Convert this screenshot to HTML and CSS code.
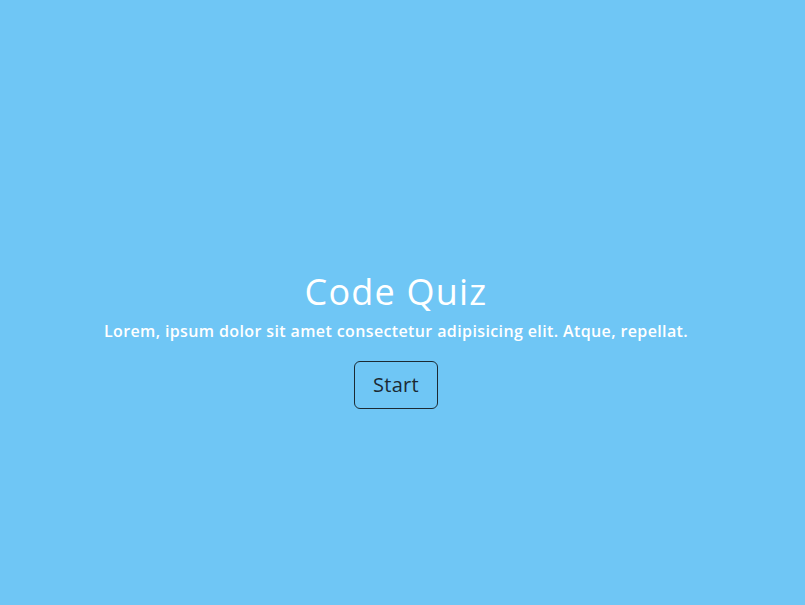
FILE: index.html
```html
<!DOCTYPE html>
<html lang="en">
<head>
<meta charset="utf-8">
<title>Code Quiz</title>
<link rel="stylesheet" href="styles.css">
</head>
<body>
<main class="intro">
  <h1 class="intro-title">Code Quiz</h1>
  <p class="intro-text">Lorem, ipsum dolor sit amet consectetur adipisicing elit. Atque, repellat.</p>
  <button class="start-btn" type="button">Start</button>
</main>
</body>
</html>
```
FILE: styles.css
```css
html, body {
  margin: 0;
  padding: 0;
  height: 100%;
}
body {
  background: #6fc6f5;
  font-family: "Open Sans", "DejaVu Sans", sans-serif;
}
.intro {
  box-sizing: border-box;
  min-height: 100%;
  padding: 74px 13px 0 0;
  display: flex;
  flex-direction: column;
  align-items: center;
  justify-content: center;
  text-align: center;
  color: #fff;
}
.intro-title {
  font-size: 36px;
  font-weight: 500;
  letter-spacing: 1.2px;
  margin: 0 0 8px;
  line-height: 1.2;
}
.intro-text {
  font-size: 16px;
  font-weight: 600;
  letter-spacing: 0.38px;
  margin: 0 0 20px;
  line-height: 1.3;
}
.start-btn {
  font-family: inherit;
  font-size: 20px;
  color: #1b2a33;
  background: transparent;
  border: 1px solid #1b2a33;
  border-radius: 6px;
  padding: 10px 18px;
  line-height: 1.3;
  letter-spacing: 0.3px;
  cursor: pointer;
}
```
